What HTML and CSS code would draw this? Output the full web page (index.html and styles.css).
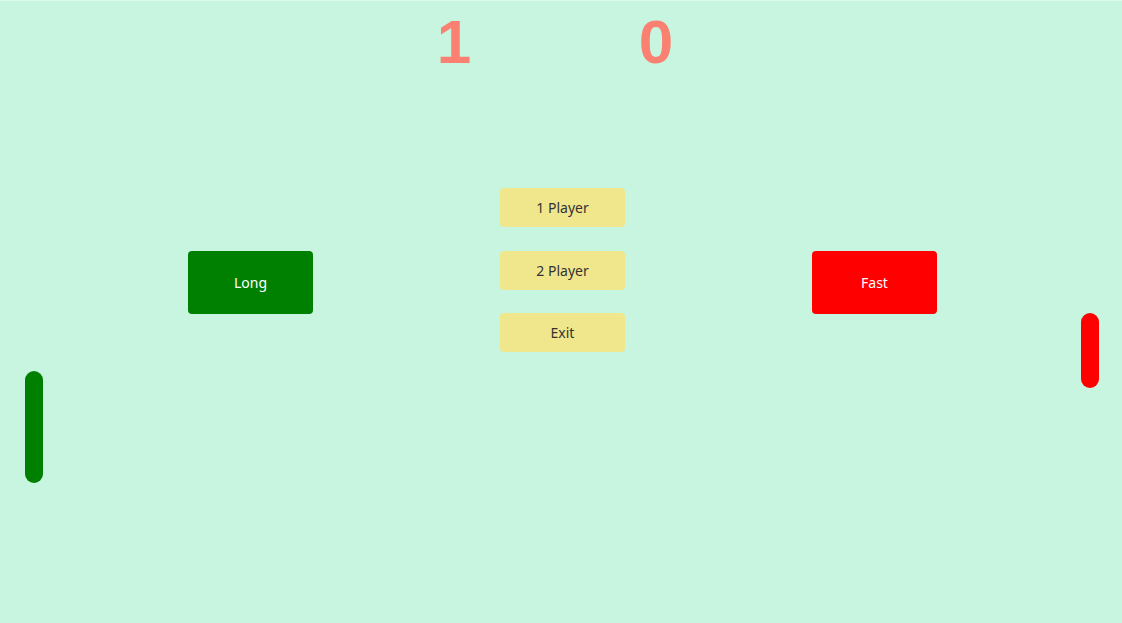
FILE: index.html
```html
<!DOCTYPE html>
<html lang="en">
<head>
<meta charset="utf-8">
<title>Pong</title>
<link rel="stylesheet" href="styles.css">
</head>
<body>
<div class="game">
  <div class="scores">
    <span class="score">1</span>
    <span class="score">0</span>
  </div>
  <div class="menu">
    <button class="btn side long">Long</button>
    <div class="center">
      <button class="btn option">1 Player</button>
      <button class="btn option">2 Player</button>
      <button class="btn option">Exit</button>
    </div>
    <button class="btn side fast">Fast</button>
  </div>
  <div class="paddle paddle-left"></div>
  <div class="paddle paddle-right"></div>
</div>
</body>
</html>
```
FILE: styles.css
```css
html, body {
  margin: 0;
  padding: 0;
}
body {
  background: #c7f5df;
  font-family: "Noto Sans", "Open Sans", sans-serif;
}
.game {
  position: relative;
  width: 1122px;
  height: 622px;
  border-top: 1px solid #dcf9eb;
  overflow: hidden;
}
.scores {
  display: flex;
  padding-left: 424px;
  gap: 142px;
  margin-top: 10px;
}
.score {
  width: 60px;
  text-align: center;
  font-family: Arial, "Liberation Sans", sans-serif;
  font-weight: 700;
  font-size: 62px;
  line-height: 62px;
  color: #fa8072;
}
.menu {
  display: flex;
  justify-content: center;
  align-items: flex-start;
  gap: 187px;
  padding-left: 3px;
  margin-top: 115px;
}
.center {
  display: flex;
  flex-direction: column;
  gap: 23.5px;
}
.btn {
  width: 125px;
  border: none;
  border-radius: 4px;
  font-family: "Noto Sans", "Open Sans", sans-serif;
  font-size: 14px;
  padding: 0;
  cursor: pointer;
}
.option {
  height: 39px;
  background: #f0e68c;
  color: #333333;
}
.side {
  height: 63px;
  margin-top: 63px;
  color: #ffffff;
}
.long {
  background: #008000;
}
.fast {
  background: #ff0000;
}
.paddle {
  position: absolute;
  width: 18px;
  border-radius: 9px;
}
.paddle-left {
  left: 25px;
  top: 370px;
  height: 112px;
  background: #008000;
}
.paddle-right {
  left: 1081px;
  top: 312px;
  height: 75px;
  background: #ff0000;
}
```
